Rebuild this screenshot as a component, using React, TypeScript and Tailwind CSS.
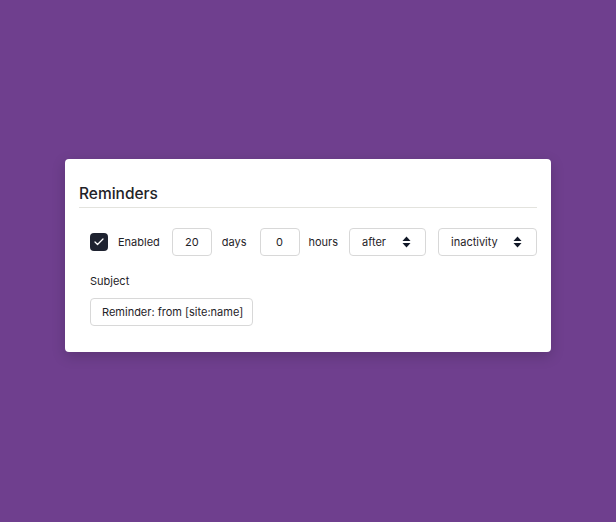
import { Check } from 'lucide-react';

const Stepper = () => (
  <svg width="9" height="12" viewBox="0 0 9 12" className="shrink-0">
    <path d="M4.5 0.5 L8.5 5 H0.5 Z" fill="#111827" />
    <path d="M4.5 11.5 L8.5 7 H0.5 Z" fill="#111827" />
  </svg>
);

const App = () => {
  return (
    <div
      className="min-h-[522px] w-full bg-[#6f3f8e] flex justify-center pt-[159px]"
      style={{ fontFamily: 'Inter, "Noto Sans", sans-serif' }}
    >
      <div className="w-[486px] h-[193px] bg-white rounded-[4px] shadow-[0_4px_14px_rgba(0,0,0,0.18)] px-[14px] pt-[25px]">
        <h2 className="text-[15.5px] leading-[20px] font-medium text-[#1f2328] pb-[3px] border-b border-[#e3e3de]">
          Reminders
        </h2>

        <div className="pl-[11px] pt-[20px]">
          <div className="flex items-center text-[11px] text-[#1f2328] whitespace-nowrap">
            <span className="w-[18px] h-[18px] rounded-[4px] bg-[#1e2230] flex items-center justify-center">
              <Check size={12} strokeWidth={2.5} className="text-white" />
            </span>
            <span className="ml-[10px]">Enabled</span>
            <div className="ml-[12px] w-[40px] h-[28px] border border-[#d8d8d8] rounded-[4px] flex items-center justify-center">
              20
            </div>
            <span className="ml-[10px]">days</span>
            <div className="ml-[13px] w-[40px] h-[28px] border border-[#d8d8d8] rounded-[4px] flex items-center justify-center">
              0
            </div>
            <span className="ml-[9px]">hours</span>
            <div className="ml-[11px] w-[77px] h-[28px] border border-[#d8d8d8] rounded-[4px] flex items-center justify-between pl-[12px] pr-[14px]">
              <span>after</span>
              <Stepper />
            </div>
            <div className="ml-[12px] w-[99px] h-[28px] border border-[#d8d8d8] rounded-[4px] flex items-center justify-between pl-[12px] pr-[14px]">
              <span>inactivity</span>
              <Stepper />
            </div>
          </div>

          <div className="mt-[17px] text-[11px] leading-[16px] text-[#1f2328]">Subject</div>
          <div className="mt-[9px] w-[163px] h-[28px] border border-[#d8d8d8] rounded-[4px] flex items-center px-[11px] text-[11px] text-[#1f2328] whitespace-nowrap">
            Reminder: from [site:name]
          </div>
        </div>
      </div>
    </div>
  );
};

export default App;
